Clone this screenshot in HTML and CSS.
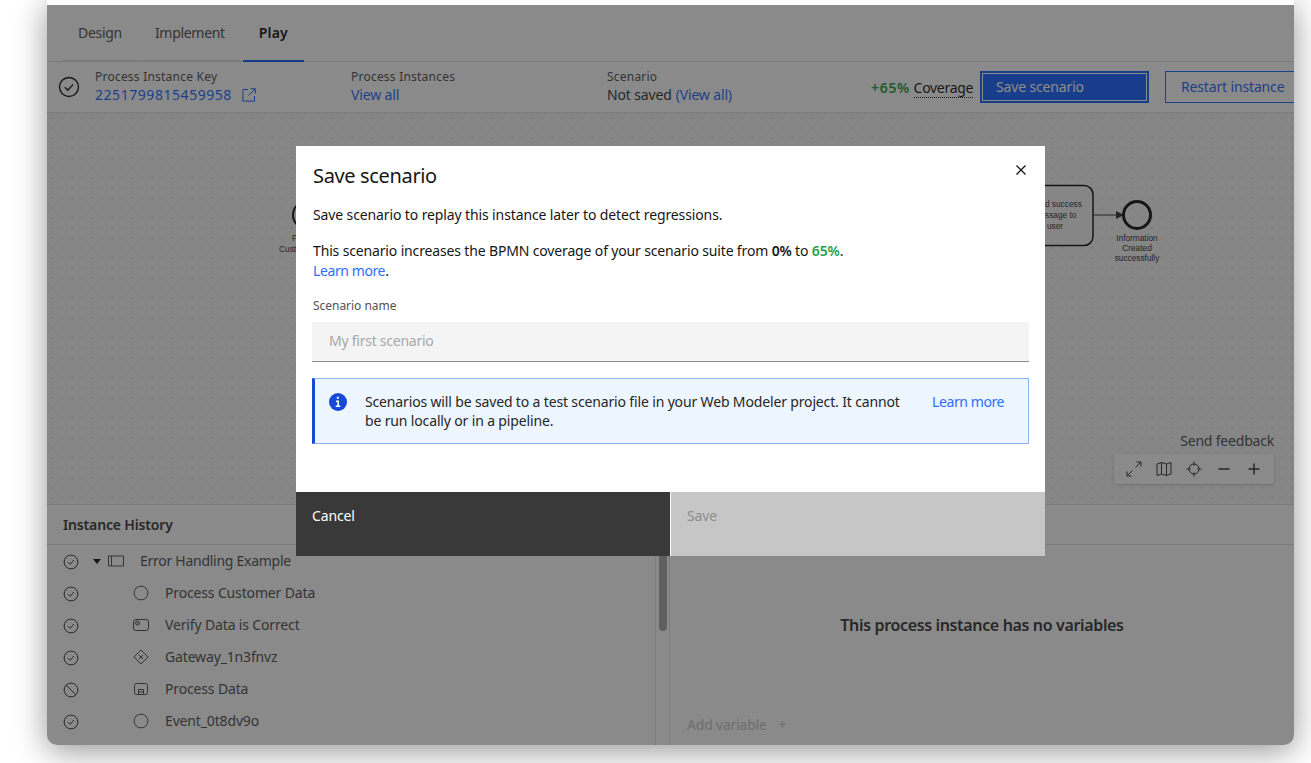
FILE: index.html
```html
<!DOCTYPE html>
<html lang="en">
<head>
  <meta charset="UTF-8">
  <meta name="viewport" content="width=device-width, initial-scale=1.0">
  <title>Save scenario</title>
  <link rel="stylesheet" href="styles.css">
</head>
<body>
  <svg class="sprite" width="0" height="0">
    <symbol id="ok" viewBox="0 0 16 16">
      <circle cx="8" cy="8" r="6.9" fill="none" stroke="currentColor"/>
      <path d="M5 8.2l2.1 2.1 3.9-4.2" fill="none" stroke="currentColor"/>
    </symbol>
    <symbol id="event" viewBox="0 0 16 16">
      <circle cx="8" cy="8" r="6.9" fill="none" stroke="currentColor"/>
    </symbol>
  </svg>

  <div class="window">
    <div class="tabs">
      <div class="tab">Design</div>
      <div class="tab">Implement</div>
      <div class="tab active">Play</div>
    </div>

    <div class="toolbar">
      <svg class="status-big"><use href="#ok"/></svg>
      <div class="info-col first">
        <div class="info-label">Process Instance Key</div>
        <div class="info-value">
          <a class="link instance-key">2251799815459958</a>
          <svg class="launch" viewBox="0 0 14 14" fill="none" stroke="currentColor">
            <path d="M6 1.5H.9v11.6h11.6V8"/>
            <path d="M6.5 7.5L13 1M8.5.7h4.8v4.8"/>
          </svg>
        </div>
      </div>
      <div class="info-col">
        <div class="info-label">Process Instances</div>
        <div class="info-value"><a class="link">View all</a></div>
      </div>
      <div class="info-col">
        <div class="info-label">Scenario</div>
        <div class="info-value">Not saved <a class="link">(View all)</a></div>
      </div>
      <div class="coverage"><b>+65%</b> <span class="coverage-word">Coverage</span></div>
      <button class="btn-save">Save scenario</button>
      <button class="btn-restart">Restart instance</button>
    </div>

    <div class="canvas">
      <svg class="diagram" width="1247" height="391" viewBox="47 113 1247 391">
        <circle cx="307" cy="215" r="14" fill="none" stroke="#161616" stroke-width="2"/>
        <text class="bpmn-label" x="307" y="241">Process</text>
        <text class="bpmn-label" x="307" y="251.500">Customer Data</text>
        <rect x="993" y="185.500" width="100" height="60" rx="9" fill="#f7f7f7" stroke="#161616" stroke-width="1.500"/>
        <text class="bpmn-label" x="1056" y="207">Send success</text>
        <text class="bpmn-label" x="1055" y="218">message to</text>
        <text class="bpmn-label" x="1055" y="229">user</text>
        <path d="M1093 215h24" stroke="#333"/>
        <path d="M1116 211l8 4-8 4z" fill="#333"/>
        <circle cx="1137" cy="215" r="13.500" fill="none" stroke="#161616" stroke-width="3"/>
        <text class="bpmn-label" x="1137" y="241">Information</text>
        <text class="bpmn-label" x="1137" y="251">Created</text>
        <text class="bpmn-label" x="1137" y="261">successfully</text>
      </svg>
      <div class="canvas-tools">
        <div class="feedback">Send feedback</div>
        <div class="tool-box">
          <svg viewBox="0 0 16 16" fill="none" stroke="currentColor"><path d="M9.500 6.500L15 1M10.500 1H15v4.500M6.500 9.500L1 15M1 10.500V15h4.500"/></svg>
          <svg viewBox="0 0 16 16" fill="none" stroke="currentColor"><path d="M1 3l4.500-1.500 5 1.500L15 1.500V13l-4.500 1.500-5-1.500L1 14.500zM5.500 1.500V13M10.500 3v11.500"/></svg>
          <svg viewBox="0 0 16 16" fill="none" stroke="currentColor"><circle cx="8" cy="8" r="5"/><path d="M8 .5v4M8 11.500v4M.5 8h4M11.500 8h4"/></svg>
          <svg viewBox="0 0 16 16" fill="none" stroke="currentColor" stroke-width="1.500"><path d="M2.500 8h11"/></svg>
          <svg viewBox="0 0 16 16" fill="none" stroke="currentColor" stroke-width="1.500"><path d="M2.500 8h11M8 2.500v11"/></svg>
        </div>
      </div>
    </div>

    <div class="bottom">
      <div class="history">
        <div class="panel-title">Instance History</div>
        <div class="row">
          <svg class="status-icon"><use href="#ok"/></svg>
          <span class="caret"></span>
          <svg class="root-icon" viewBox="0 0 16 16" fill="none" stroke="currentColor"><path d="M.5 3h15v10H.5zM3.500 3v10"/></svg>
          <span class="row-text root-text">Error Handling Example</span>
        </div>
        <div class="row">
          <svg class="status-icon"><use href="#ok"/></svg>
          <svg class="node-icon"><use href="#event"/></svg>
          <span class="row-text">Process Customer Data</span>
        </div>
        <div class="row">
          <svg class="status-icon"><use href="#ok"/></svg>
          <svg class="node-icon" viewBox="0 0 16 16" fill="none" stroke="currentColor"><rect x=".5" y="2.500" width="15" height="11" rx="2.500"/><circle cx="4.500" cy="6" r="2"/><path d="M3.500 5l2 2"/></svg>
          <span class="row-text">Verify Data is Correct</span>
        </div>
        <div class="row">
          <svg class="status-icon"><use href="#ok"/></svg>
          <svg class="node-icon" viewBox="0 0 16 16" fill="none" stroke="currentColor"><path d="M8 1l7 7-7 7-7-7zM5.800 5.800l4.400 4.400M10.200 5.800l-4.400 4.400"/></svg>
          <span class="row-text">Gateway_1n3fnvz</span>
        </div>
        <div class="row">
          <svg class="status-icon" viewBox="0 0 16 16" fill="none" stroke="currentColor"><circle cx="8" cy="8" r="6.900"/><path d="M3.200 3.200l9.600 9.600"/></svg>
          <svg class="node-icon" viewBox="0 0 16 16" fill="none" stroke="currentColor"><rect x="1.500" y="2.500" width="13" height="11" rx="2"/><path d="M5.500 13.500v-5h5v5M5.500 11h5"/></svg>
          <span class="row-text">Process Data</span>
        </div>
        <div class="row">
          <svg class="status-icon"><use href="#ok"/></svg>
          <svg class="node-icon"><use href="#event"/></svg>
          <span class="row-text">Event_0t8dv9o</span>
        </div>
      </div>
      <div class="splitter"><div class="thumb"></div></div>
      <div class="variables">
        <div class="panel-title"></div>
        <div class="no-vars">This process instance has no variables</div>
        <div class="add-var">Add variable <span class="add-plus">+</span></div>
      </div>
    </div>

    <div class="overlay"></div>

    <div class="dialog">
      <svg class="dialog-close" viewBox="0 0 12 12" stroke="#161616" stroke-width="1.300"><path d="M1.500 1.500l9 9M10.500 1.500l-9 9"/></svg>
      <h2 class="dialog-title">Save scenario</h2>
      <p class="dialog-text first">Save scenario to replay this instance later to detect regressions.</p>
      <p class="dialog-text">This scenario increases the BPMN coverage of your scenario suite from <b>0%</b> to <b class="green">65%</b>.<br><a class="link-bright">Learn more</a>.</p>
      <label class="field-label">Scenario name</label>
      <div class="field">My first scenario</div>
      <div class="notice">
        <svg class="notice-icon" viewBox="0 0 18 18"><circle cx="9" cy="9" r="9" fill="#1549d6"/><path d="M7.800 3.800h2v2h-2zM7 7.600h3v5h1.300v1.400H6.700v-1.400h1.700V9H7z" fill="#fff"/></svg>
        <div class="notice-text">Scenarios will be saved to a test scenario file in your Web Modeler project. It cannot<br>be run locally or in a pipeline.</div>
        <a class="link-bright notice-link">Learn more</a>
      </div>
      <div class="dialog-footer">
        <div class="footer-btn cancel">Cancel</div>
        <div class="footer-btn save">Save</div>
      </div>
    </div>
  </div>
</body>
</html>
```

FILE: styles.css
```css
* {
  box-sizing: border-box;
}

html, body {
  margin: 0;
  height: 763px;
  overflow: hidden;
  background: #fff;
}

body {
  font-family: "Noto Sans", "Open Sans", sans-serif;
  font-size: 14px;
  letter-spacing: -0.15px;
  color: #161616;
  padding-left: 47px;
}

.sprite {
  position: absolute;
}

.window {
  position: relative;
  width: 1247px;
  height: 745px;
  background: #fff;
  border-top: 5px solid #fff;
  border-radius: 0 0 10px 10px;
  box-shadow: 0 6px 32px rgba(0, 0, 0, 0.42);
  overflow: hidden;
  display: flex;
  flex-direction: column;
}

.window::before {
  content: '';
  position: absolute;
  top: -1px;
  left: 0;
  right: 0;
  height: 1px;
  background: #c6c6c6;
}

.tabs {
  display: flex;
  height: 57px;
  padding-left: 15px;
  border-bottom: 1px solid #e0e0e0;
  flex-shrink: 0;
}

.tab {
  padding: 18px 16px 0;
  border-bottom: 2px solid #e0e0e0;
  margin-right: 1px;
  margin-bottom: -1px;
  color: #525252;
  letter-spacing: -0.3px;
}

.tab.active {
  margin-left: 1px;
  font-weight: 600;
  color: #161616;
  letter-spacing: 0.1px;
  border-bottom-color: #0f62fe;
}

.toolbar {
  display: flex;
  align-items: center;
  height: 51px;
  padding-left: 11px;
  border-bottom: 1px solid #e0e0e0;
  flex-shrink: 0;
}

.status-big {
  width: 22px;
  height: 22px;
  color: #161616;
  flex-shrink: 0;
}

.info-col {
  width: 256px;
  flex-shrink: 0;
}

.info-col.first {
  margin-left: 15px;
}

.info-label {
  font-size: 12px;
  line-height: 16px;
  letter-spacing: 0.22px;
  color: #525252;
}

.info-value {
  line-height: 20px;
  color: #393939;
  display: flex;
  align-items: center;
  gap: 4px;
}

.link {
  color: #1f6bff;
}

.instance-key {
  letter-spacing: 0.55px;
}

.launch {
  width: 14px;
  height: 14px;
  margin-left: 6px;
  color: #1f6bff;
}

.coverage {
  margin-left: 8px;
  width: 101px;
  flex-shrink: 0;
  white-space: nowrap;
}

.coverage b {
  color: #24a148;
  font-weight: 600;
  letter-spacing: 0.7px;
}

.coverage-word {
  border-bottom: 1px dotted #161616;
  letter-spacing: -0.3px;
}

.btn-save,
.btn-restart {
  height: 32px;
  width: 169px;
  flex-shrink: 0;
  font: inherit;
  letter-spacing: inherit;
  text-align: left;
  padding: 0 14px 2px;
  border-radius: 0;
}

.btn-save {
  margin-left: 8px;
  background: #1b64fe;
  color: #fff;
  border: 2px solid #1b64fe;
  box-shadow: inset 0 0 0 1px #fff;
}

.btn-restart {
  margin-left: 16px;
  background: #fff;
  color: #1f6bff;
  border: 1px solid #1f6bff;
  padding: 0 15px 2px;
}

.canvas {
  position: relative;
  flex: 1;
  background-color: #f6f6f6;
  background-image: radial-gradient(circle, #e2e2e2 0.7px, transparent 1px);
  background-size: 10px 10px;
}

.diagram {
  position: absolute;
  top: 0;
  left: 0;
  letter-spacing: 0;
}

.bpmn-label {
  font-family: "Liberation Sans", Arial, sans-serif;
  font-size: 8.300px;
  text-anchor: middle;
  fill: #333;
}

.canvas-tools {
  position: absolute;
  right: 20px;
  bottom: 20px;
  width: 160px;
}

.feedback {
  text-align: right;
  line-height: 18px;
  color: #525252;
  margin-bottom: 4px;
  letter-spacing: -0.2px;
}

.tool-box {
  display: flex;
  height: 30px;
  padding-left: 5px;
  background: #fff;
  border-radius: 2px;
  box-shadow: 0 1px 3px rgba(0, 0, 0, 0.2);
}

.tool-box svg {
  width: 16px;
  height: 16px;
  margin: 7px;
  color: #393939;
}

.bottom {
  display: grid;
  grid-template-columns: 608px 15px 1fr;
  height: 241px;
  flex-shrink: 0;
  border-top: 1px solid #e0e0e0;
}

.panel-title {
  height: 40px;
  line-height: 40px;
  padding-left: 16px;
  font-weight: 600;
  color: #393939;
  border-bottom: 1px solid #e0e0e0;
}

.row {
  display: flex;
  align-items: center;
  height: 32px;
  padding-left: 16px;
  color: #525252;
}

.row-text {
  line-height: 18px;
  margin-top: -1px;
}

.root-text {
  letter-spacing: -0.27px;
}

.status-icon,
.node-icon,
.root-icon {
  width: 16px;
  height: 16px;
  flex-shrink: 0;
}

.status-icon {
  color: #393939;
  margin-top: 2px;
}

.node-icon {
  margin-left: 54px;
  margin-right: 16px;
  margin-bottom: 1px;
}

.caret {
  width: 0;
  height: 0;
  margin-left: 14px;
  margin-right: 7px;
  border-left: 4px solid transparent;
  border-right: 4px solid transparent;
  border-top: 5px solid #161616;
}

.root-icon {
  margin-right: 16px;
}

.splitter {
  position: relative;
  border-left: 1px solid #e0e0e0;
  border-right: 1px solid #e0e0e0;
}

.thumb {
  position: absolute;
  top: 40px;
  left: 3px;
  width: 8px;
  height: 86px;
  border-radius: 0 0 4px 4px;
  background: #a8a8a8;
}

.variables {
  display: flex;
  flex-direction: column;
}

.variables .panel-title {
  flex-shrink: 0;
}

.no-vars {
  flex: 1;
  display: flex;
  align-items: center;
  justify-content: center;
  padding-bottom: 2px;
  font-size: 16px;
  font-weight: 600;
  letter-spacing: -0.35px;
  color: #393939;
}

.add-var {
  height: 38px;
  padding: 8px 0 0 17px;
  line-height: 20px;
  color: #c6c6c6;
  letter-spacing: -0.2px;
}

.add-plus {
  margin-left: 8px;
}

.overlay {
  position: absolute;
  inset: -5px 0 0;
  background: rgba(22, 22, 22, 0.5);
}

.dialog {
  position: absolute;
  top: 141px;
  left: 249px;
  width: 749px;
  height: 410px;
  padding-top: 16px;
  background: #fff;
  display: flex;
  flex-direction: column;
}

.dialog-close {
  position: absolute;
  top: 18px;
  right: 18px;
  width: 12px;
  height: 12px;
}

.dialog-title {
  margin: 0 17px;
  font-size: 20px;
  line-height: 28px;
  font-weight: 400;
  letter-spacing: -0.35px;
}

.dialog-text {
  margin: 16px 16px 0 17px;
  line-height: 20px;
}

.dialog-text.first {
  margin-top: 15px;
  letter-spacing: -0.12px;
}

.dialog-text b {
  font-weight: 600;
}

.green {
  color: #24a148;
}

.link-bright {
  color: #2c6eff;
  letter-spacing: -0.4px;
}

.field-label {
  margin: 17px 16px 0 17px;
  font-size: 12px;
  line-height: 16px;
  letter-spacing: -0.03px;
  color: #525252;
}

.field {
  margin: 8px 16px 0;
  height: 40px;
  line-height: 38px;
  padding-left: 17px;
  background: #f4f4f4;
  border-bottom: 1px solid #8d8d8d;
  color: #a8a8a8;
  letter-spacing: -0.25px;
}

.notice {
  margin: 16px 16px 0;
  height: 66px;
  display: flex;
  padding: 13px 0 0 14px;
  background: #edf5ff;
  border: 1px solid #8fb1f5;
  border-left: 3px solid #1549d6;
}

.notice-icon {
  width: 18px;
  height: 18px;
  margin-top: 1px;
  flex-shrink: 0;
}

.notice-text {
  margin-left: 18px;
  width: 567px;
  line-height: 19px;
  white-space: nowrap;
  color: #262626;
}

.notice-link {
  line-height: 19px;
}

.dialog-footer {
  margin-top: auto;
  display: grid;
  grid-template-columns: 1fr 1fr;
  gap: 1px;
  height: 64px;
}

.footer-btn {
  padding: 14px 16px 0;
  line-height: 20px;
}

.cancel {
  background: #393939;
  color: #fff;
}

.save {
  background: #c6c6c6;
  color: #8d8d8d;
}
```
